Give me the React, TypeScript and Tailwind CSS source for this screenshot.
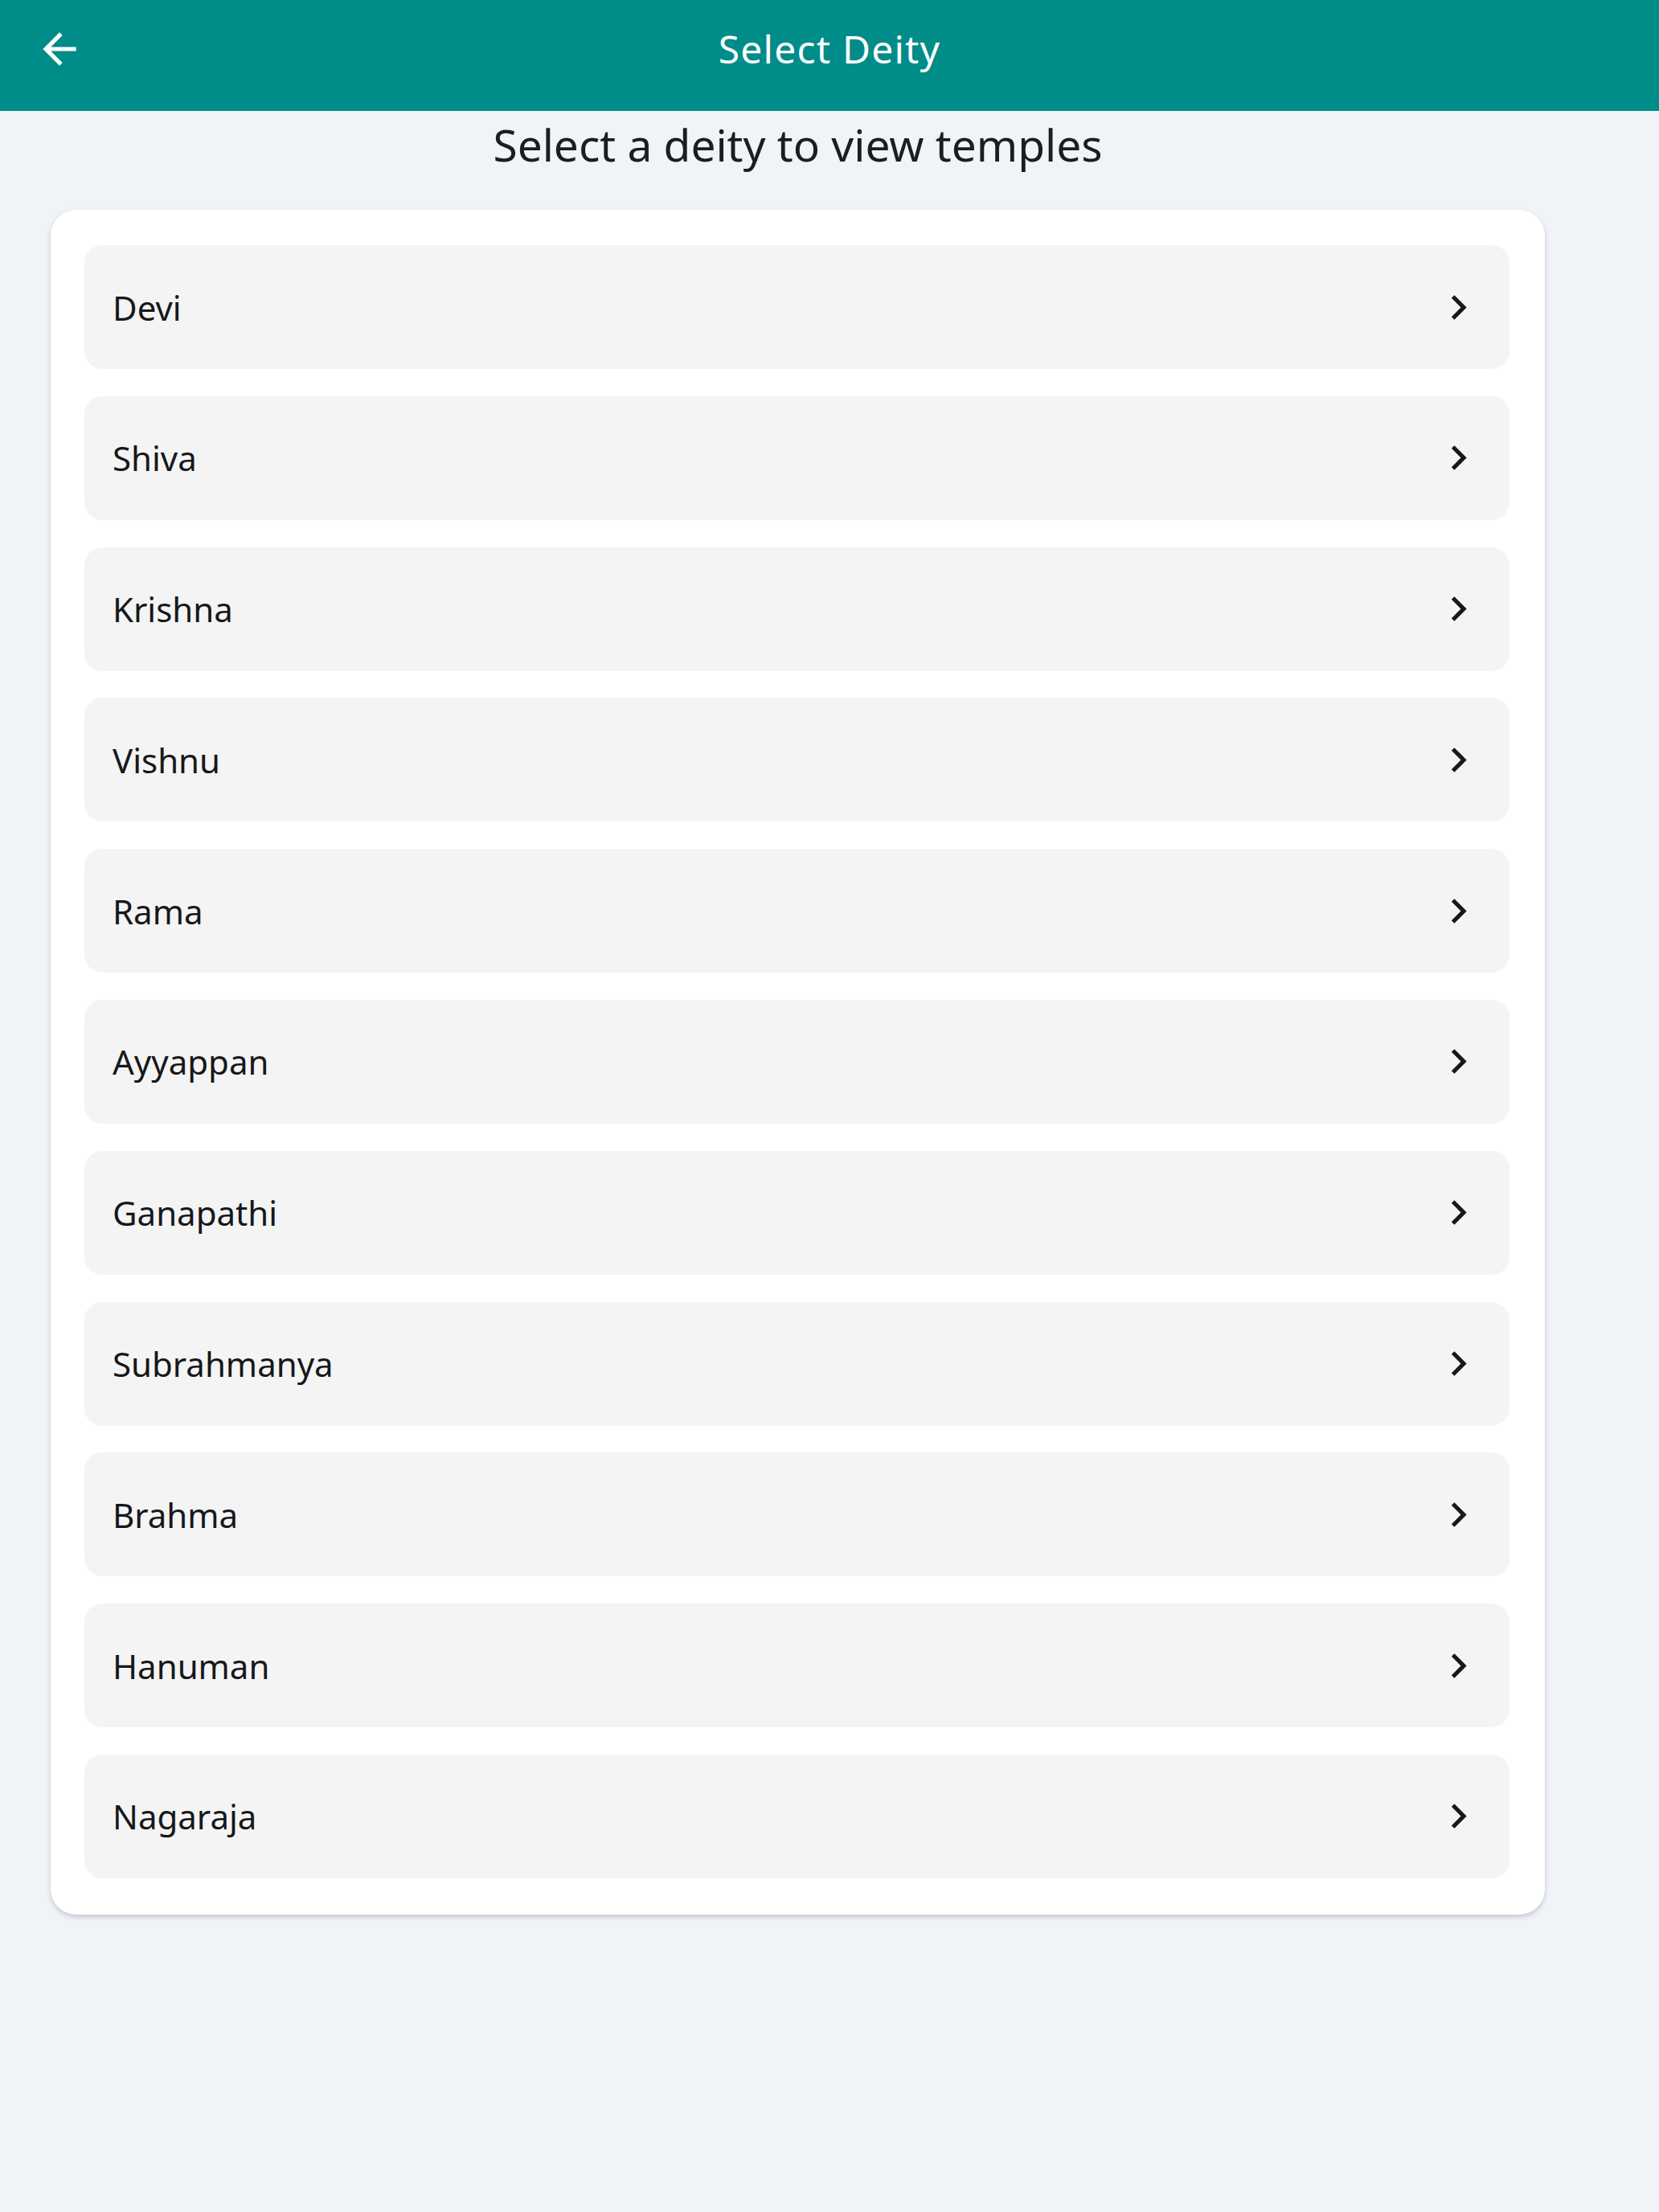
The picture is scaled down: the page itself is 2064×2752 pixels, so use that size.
const DEITIES = [
  "Devi",
  "Shiva",
  "Krishna",
  "Vishnu",
  "Rama",
  "Ayyappan",
  "Ganapathi",
  "Subrahmanya",
  "Brahma",
  "Hanuman",
  "Nagaraja",
];

const FONT = "font-['Noto_Sans',sans-serif]";

function BackIcon() {
  return (
    <svg viewBox="0 0 24 24" className="w-[62px] h-[62px]" fill="#ffffff">
      <path d="M20 11H7.83l5.59-5.59L12 4l-8 8 8 8 1.41-1.41L7.83 13H20v-2z" />
    </svg>
  );
}

function ChevronIcon() {
  return (
    <svg viewBox="0 0 24 24" className="w-[61px] h-[61px] shrink-0" fill="#18181a">
      <path d="M10 6L8.59 7.41 13.17 12l-4.58 4.59L10 18l6-6z" />
    </svg>
  );
}

export default function App() {
  return (
    <div className={`min-h-screen bg-[#f0f3f8] ${FONT}`}>
      {/* app bar */}
      <header className="h-[138px] bg-[#008c88]">
        <div className="h-[122px] grid grid-cols-[1fr_auto_1fr] items-center">
          <button className="justify-self-start ml-[43px] flex items-center justify-center">
            <BackIcon />
          </button>
          <h1 className="text-white text-[48px] tracking-[1.2px] leading-none">Select Deity</h1>
          <div />
        </div>
      </header>

      {/* body */}
      <main className="pl-[63px] pr-[142px]">
        <h2 className="mt-[8px] mb-[48px] text-center text-[55px] leading-[67px] text-[#1b1d21]">
          Select a deity to view temples
        </h2>

        <div className="bg-white rounded-[32px] shadow-[0_3px_6px_rgba(0,0,0,0.18)] pl-[42px] pr-[44px] pt-[44px] pb-[45px] flex flex-col gap-[33.8px]">
          {DEITIES.map((name) => (
            <div
              key={name}
              className="h-[154px] rounded-[22px] bg-[#f4f4f4] pl-[35px] pr-[33px] flex items-center justify-between"
            >
              <span className="text-[42px] text-[#17181a]">{name}</span>
              <ChevronIcon />
            </div>
          ))}
        </div>
      </main>
    </div>
  );
}
